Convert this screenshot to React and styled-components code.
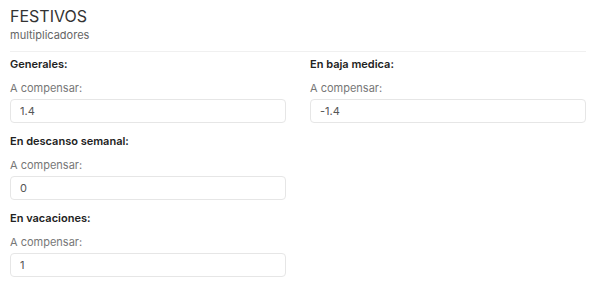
import React from 'react'
import styled, { createGlobalStyle } from 'styled-components';

const GlobalStyle = createGlobalStyle`
    body {
        margin: 0;
        background: #fff;
        font-family: Inter, "Liberation Sans", sans-serif;
    }
`;

const Container = styled.div`
    padding: 6px 14px 0 10px;
`;

const Title = styled.h1`
    margin: 0;
    font-size: 16px;
    font-weight: 400;
    line-height: 20px;
    color: #333;
`;

const Subtitle = styled.div`
    margin-top: 2px;
    font-size: 11px;
    line-height: 14px;
    color: #666;
`;

const Divider = styled.hr`
    margin: 9px 0 4px;
    border: none;
    border-top: 1px solid #f0f0f0;
`;

const Grid = styled.div`
    display: grid;
    grid-template-columns: 1fr 1fr;
    column-gap: 24px;
`;

const Group = styled.div`
    display: flex;
    flex-direction: column;
    margin-bottom: 10px;
`;

const Heading = styled.div`
    font-size: 11px;
    line-height: 16px;
    font-weight: 600;
    color: #222;
    margin-bottom: 8px;
`;

const Label = styled.label`
    font-size: 11px;
    line-height: 16px;
    color: #777;
    margin-bottom: 3px;
`;

const Input = styled.input`
    box-sizing: border-box;
    height: 24px;
    width: 100%;
    padding: 0 9px;
    border: 1px solid #e6e6e6;
    border-radius: 4px;
    font-family: inherit;
    font-size: 11px;
    color: #555;
    outline: none;
`;

const Field = ({ title, value }) => (
    <Group>
        <Heading>{title}</Heading>
        <Label>A compensar:</Label>
        <Input defaultValue={value} />
    </Group>
)

const App = () => {
  return (
    <Container>
        <GlobalStyle />
        <Title>FESTIVOS</Title>
        <Subtitle>multiplicadores</Subtitle>
        <Divider />
        <Grid>
            <Field title="Generales:" value="1.4" />
            <Field title="En baja medica:" value="-1.4" />
            <Field title="En descanso semanal:" value="0" />
            <div />
            <Field title="En vacaciones:" value="1" />
        </Grid>
    </Container>
  )
}

export default App
